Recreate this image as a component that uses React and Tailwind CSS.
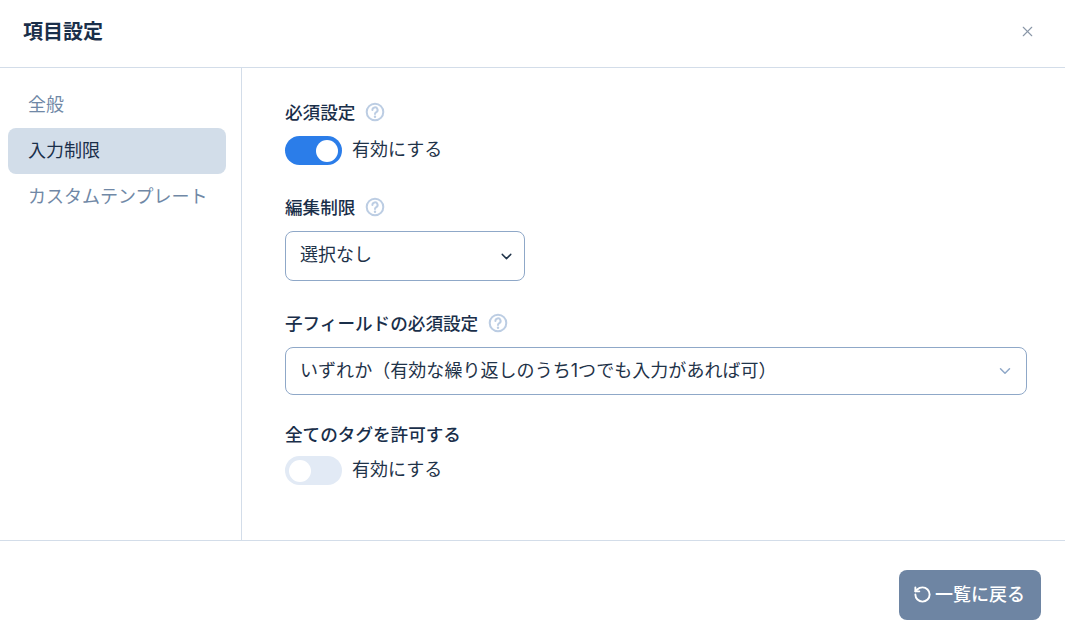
import React from 'react';
import { ChevronDown, RotateCcw, X } from 'lucide-react';

const FONT = "font-['Inter','Noto_Sans_CJK_JP',sans-serif]";

function HelpIcon() {
  return (
    <svg width="20" height="20" viewBox="0 0 20 20" fill="none" className="shrink-0 -translate-y-px text-[#bccde3]">
      <circle cx="10" cy="10" r="8.3" stroke="currentColor" strokeWidth="2" />
      <path d="M7.4 8a2.6 2.6 0 1 1 3.9 2.2c-.9.5-1.3 1-1.3 1.8" stroke="currentColor" strokeWidth="2" strokeLinecap="round" />
      <circle cx="10" cy="14.8" r="1.2" fill="currentColor" />
    </svg>
  );
}

function FieldLabel({ children, help }) {
  return (
    <div className="flex items-center h-[24px] gap-[10px] text-[17.6px] font-medium text-[#1a2f4a]">
      <span>{children}</span>
      {help && <HelpIcon />}
    </div>
  );
}

function Toggle({ on }) {
  return (
    <div className="flex items-center gap-[10px] mt-[11px]">
      <div className={`flex items-center w-[57px] h-[29px] rounded-full px-[4px] ${on ? 'bg-[#2b7de9] justify-end' : 'bg-[#e2eaf5] justify-start'}`}>
        <div className="w-[22px] h-[22px] rounded-full bg-white" />
      </div>
      <span className="text-[18px] -translate-y-px text-[#1f3349]">有効にする</span>
    </div>
  );
}

export default function App() {
  return (
    <div className={`${FONT} w-[1065px] h-[644px] bg-white flex flex-col overflow-hidden`}>
      {/* Header */}
      <div className="flex items-center justify-between h-[68px] shrink-0 border-b border-[#d3dde9] pl-[23px] pr-[30px] pb-[4px]">
        <h1 className="text-[20px] font-bold text-[#1a2f4a]">項目設定</h1>
        <X size={17} strokeWidth={1.6} className="text-[#8a97a8] mr-[-1px]" />
      </div>

      {/* Body */}
      <div className="flex h-[473px] shrink-0 border-b border-[#d3dde9]">
        <aside className="w-[242px] shrink-0 border-r border-[#d3dde9] pt-[14px] pl-[8px] pr-[15px]">
          <div className="h-[46px] flex items-center px-[20px] pb-[2px] text-[18px] text-[#7088a6]">全般</div>
          <div className="h-[46px] flex items-center px-[20px] pb-[2px] text-[18px] text-[#1a2f4a] bg-[#d2dde9] rounded-[8px]">入力制限</div>
          <div className="h-[46px] flex items-center px-[20px] pb-[2px] text-[18px] whitespace-nowrap text-[#7088a6]">カスタムテンプレート</div>
        </aside>

        <main className="flex-1 pl-[43px] pr-[38px] pt-[33px]">
          <FieldLabel help>必須設定</FieldLabel>
          <Toggle on />

          <div className="mt-[31px]">
            <FieldLabel help>編集制限</FieldLabel>
          </div>
          <div className="mt-[11px] flex items-center justify-between w-[240px] h-[50px] border border-[#8fa8c8] rounded-[8px] pl-[14px] pr-[9px]">
            <span className="text-[18px] -translate-y-[2px] text-[#1f3349]">選択なし</span>
            <ChevronDown size={17} strokeWidth={2} className="text-[#1f3349]" />
          </div>

          <div className="mt-[31px]">
            <FieldLabel help>子フィールドの必須設定</FieldLabel>
          </div>
          <div className="mt-[11px] flex items-center justify-between h-[48px] border border-[#8fa8c8] rounded-[8px] pl-[14px] pr-[11px]">
            <span className="text-[18px] tracking-[0.05px] -translate-y-px text-[#1f3349]">いずれか（有効な繰り返しのうち1つでも入力があれば可）</span>
            <ChevronDown size={18} strokeWidth={2} className="text-[#8fa8c8] -translate-x-[1px]" />
          </div>

          <div className="mt-[28px]">
            <FieldLabel>全てのタグを許可する</FieldLabel>
          </div>
          <div className="-mt-[2px]">
            <Toggle />
          </div>
        </main>
      </div>

      {/* Footer */}
      <div className="flex-1 flex justify-end pt-[29px] pr-[24px]">
        <button className="flex items-center justify-center gap-[3px] w-[142px] h-[50px] rounded-[8px] bg-[#6e85a3] text-white text-[18px] font-medium">
          <RotateCcw size={19} strokeWidth={2.4} className="-translate-y-px -translate-x-[1px]" />
          <span className="-translate-y-px -translate-x-[1px]">一覧に戻る</span>
        </button>
      </div>
    </div>
  );
}
